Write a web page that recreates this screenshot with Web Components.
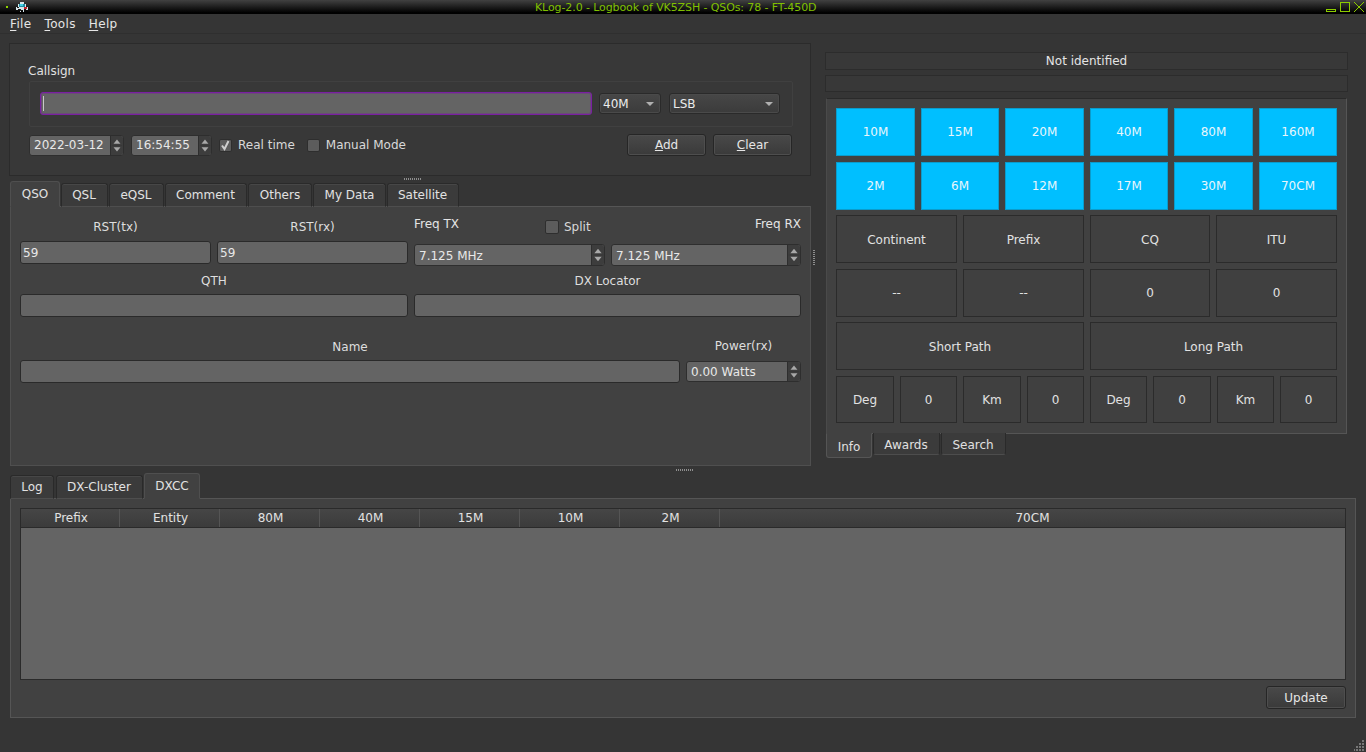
<!DOCTYPE html>
<html><head><meta charset="utf-8">
<style>
html,body{margin:0;padding:0;height:752px;overflow:hidden;background:#353535;color:#e4e4e4;font:12px/16px "DejaVu Sans",sans-serif}
k-window{display:block}
</style></head><body>
<k-window></k-window>
<script>
function def(name, css, html, extra){
  const t=document.createElement('template');
  t.innerHTML='<style>:host,*{box-sizing:border-box}'+css+'</style>'+html;
  customElements.define(name, class extends HTMLElement{
    constructor(){super();this.attachShadow({mode:'open'}).appendChild(t.content.cloneNode(true));}
    connectedCallback(){ if(extra) extra(this,this.shadowRoot); }
  });
}
const spinBtns=`<span class="b"><svg width="12" height="100%" viewBox="0 0 12 22" preserveAspectRatio="xMidYMid meet"><path d="M2 9L6 4l4 5z" fill="#a9a9a9"/><path d="M0 11H12" stroke="#383838"/><path d="M2 13l4 5 4-5z" fill="#a9a9a9"/></svg></span>`;

def('k-title',`:host{display:flex;align-items:center;height:14px;background:linear-gradient(#414141,#000 90%);position:relative;color:#80c000;line-height:14px}
.l{display:flex;align-items:center;width:535px;padding-left:6px;gap:8px}
.t{flex:1;white-space:nowrap;font-size:11px;letter-spacing:-.1px;padding-top:1px}
.r{display:flex;align-items:center;gap:4px;padding-right:2px}svg{display:block}`,
`<div class="l"><svg width="2" height="2"><rect width="2" height="2" fill="#8fd400"/></svg>
<svg width="12" height="10" viewBox="0 0 12 10"><path d="M4 0h4v2h2v3h2v3h-2V7H8v3H7V8H5v2H4V7H2v1H0V5h2V2h2z" fill="#d8e6ea"/><path d="M3 2h6v3H3z" fill="#1f8fa5"/><path d="M4 2h3v2H4z" fill="#46d0e6"/><path d="M8 5h3v2H8z" fill="#c8202a"/><path d="M1 5h2v1H1zM4 7h1v2H4z" fill="#222"/></svg></div>
<div class="t">KLog-2.0 - Logbook of VK5ZSH - QSOs: 78 - FT-450D</div>
<div class="r">
<svg width="10" height="10" viewBox="0 0 10 10"><rect x=".5" y="7.5" width="9" height="2" fill="none" stroke="#8ccc00"/></svg>
<svg width="10" height="10" viewBox="0 0 10 10"><rect x=".5" y=".5" width="9" height="9" fill="none" stroke="#8ccc00"/></svg>
<svg width="10" height="10" viewBox="0 0 10 10"><path d="M0 0l10 10M10 0L0 10" stroke="#8ccc00" fill="none"/></svg>
</div>`);

def('k-menu',`:host{display:flex;height:20px;padding:1px 0 0 10px;gap:13px;border-bottom:1px solid #2f2f2f;line-height:18px;color:#e6e6e6;letter-spacing:.35px}
u{text-underline-offset:2px}`,`<span><u>F</u>ile</span><span><u>T</u>ools</span><span><u>H</u>elp</span>`);

def('k-line',`:host{display:flex;align-items:center;height:var(--h,23px);padding:0 2px;background:#646464;border:1px solid #2a2a2a;border-radius:3px;color:#e8e8e8;min-width:0}`,`<slot></slot>`);

def('k-spin',`:host{display:flex;height:var(--h,22px);background:#646464;border:1px solid #2e2e2e;border-radius:3px;color:#e8e8e8;overflow:hidden;min-width:0}
.v{flex:1;display:flex;align-items:center;padding-left:var(--p,4px);padding-top:var(--pt,0);white-space:nowrap}
.b{flex:none;width:13px;background:#3d3d3d;border-left:1px solid #2e2e2e;display:flex;align-items:center;justify-content:center;height:100%}`,
`<div class="v"><slot></slot></div>`+spinBtns);

def('k-combo',`:host{display:flex;align-items:center;height:21px;padding:0 6px 0 3px;justify-content:space-between;background:linear-gradient(#474747,#3b3b3b);border:1px solid #2a2a2a;box-shadow:inset 0 0 0 1px #4a4a4a;border-radius:3px;color:#ececec}
i{display:block;width:0;height:0;border:4px solid transparent;border-top:4px solid #b0b0b0;border-bottom:0}`,`<span><slot></slot></span><i></i>`);

def('k-btn',`:host{display:flex;align-items:center;justify-content:center;height:22px;background:linear-gradient(#494949,#3a3a3a);border:1px solid #262626;box-shadow:inset 0 0 0 1px #4e4e4e;border-radius:3px;color:#e6e6e6}
::slotted(span){white-space:nowrap}`,`<slot></slot>`);

def('k-check',`:host{display:inline-flex;align-items:center;gap:var(--g,6px);color:#d8d8d8;white-space:nowrap}
.c{display:block;width:var(--s,13px);height:var(--s,13px);background:#5c5c5c;border:1px solid #2e2e2e;border-radius:2px}`,
`<svg class="c" viewBox="0 0 11 11"><path class="m" d="M2 5.5l2.5 3.5 4-8" fill="none" stroke="#cfcfcf" stroke-width="2" style="display:none"/></svg><slot></slot>`,
(el,s)=>{ if(el.hasAttribute('checked')) s.querySelector('.m').style.display='block'; });

def('k-tabbar',`:host{display:flex;align-items:flex-end;height:var(--tb,26px);padding-left:0;gap:1px;position:relative;z-index:1;margin-bottom:-1px}`,`<slot></slot>`);
def('k-tab',`:host{display:flex;align-items:center;justify-content:center;height:24px;width:var(--w);padding-right:var(--n,0);background:#3b3b3b;border:1px solid #2a2a2a;border-bottom:1px solid #4e4e4e;border-radius:3px 3px 0 0;color:#e2e2e2;box-shadow:inset 0 1px 0 #474747}
:host([on]){height:26px;background:#414141;border-color:#4f4f4f;border-bottom-color:#414141;box-shadow:none;padding-bottom:1px}`,`<slot></slot>`);

def('k-cell',`:host{display:flex;align-items:center;justify-content:center;min-width:0;background:#404040;border:1px solid #2b2b2b;color:#e2e2e2;padding-top:1px}
:host([band]){background:#00bfff;border-color:#0a9ccc;color:#e8f6fc;padding-top:0}`,`<slot></slot>`);

def('k-grip',`:host{display:flex;align-items:center;justify-content:center;flex:none}
.d{display:block}
:host([dir=h]) .d{width:18px;height:2px;background-size:2px 2px;background-image:linear-gradient(90deg,#8e8e8e 50%,transparent 50%)}
:host([dir=v]) .d{width:2px;height:16px;background-size:2px 2px;background-image:linear-gradient(#8e8e8e 50%,transparent 50%)}`,`<span class="d"></span>`);

def('k-callbar',`:host{display:block;width:802px;height:133px;background:#383838;border:1px solid #2b2b2b;padding:19px 18px 0}
.lab{height:18px;line-height:16px;color:#e0e0e0}
.frame{height:46px;width:764px;margin-left:1px;border:1px solid #404040;border-radius:2px;display:flex;align-items:center;padding:0 12px 1px 10px;gap:7px}
.in{flex:none;width:552px;height:23px;background:#646464;border:1px solid #7a1fa2;border-radius:3px;padding:3px 0 3px 2px;box-shadow:inset 0 0 0 1px #6a4a78}
.in i{display:block;width:1px;height:15px;background:#c8c8c8}
.row{display:flex;align-items:center;margin:7px 0 0 1px;height:22px}
.sp{flex:1}`,
`<div class="lab">Callsign</div>
<div class="frame"><div class="in"><i></i></div><k-combo style="width:62px">40M</k-combo><k-combo style="width:111px;margin-left:1px">LSB</k-combo></div>
<div class="row"><k-spin style="width:95px;--h:21px">2022-03-12</k-spin><k-spin style="width:81px;--h:21px;margin-left:7px">16:54:55</k-spin>
<k-check checked style="margin-left:7px">Real time</k-check><k-check style="margin-left:12px">Manual Mode</k-check><span class="sp"></span>
<k-btn style="width:79px"><span><u>A</u>dd</span></k-btn><k-btn style="width:79px;margin-left:7px"><span><u>C</u>lear</span></k-btn></div>`);

def('k-qso',`:host{display:block;height:260px;background:#414141;border:1px solid #4f4f4f;border-top-color:#555;padding:0 9px}
.g{display:grid;grid-template-columns:191px 191px 191px 190px;column-gap:6px}
.l{display:flex;align-items:center;justify-content:center;white-space:nowrap;color:#dedede}
.r1{grid-template-rows:34px 25px;align-items:start}
.r1 .l{height:16px;margin-top:12px}
.f{display:grid;grid-template-columns:131px auto 1fr;grid-column:3 / span 2;margin-top:9px;height:18px}
.f k-check{margin-top:3px;--s:14px;--g:5px}
.f span:last-child{justify-self:end}
.top2{margin-top:3px;--pt:1px}
.r2{display:grid;grid-template-columns:388px 387px;column-gap:6px;margin-top:7px}
.r2 .l{height:16px;margin-bottom:5px}
.r3{display:grid;grid-template-columns:660px 115px;column-gap:6px;margin-top:22px}
.r3 .l{height:16px;margin-bottom:5px}`,
`<div class="g r1">
<div class="l" style="grid-column:1">RST(tx)</div><div class="l" style="grid-column:2">RST(rx)</div>
<div class="f"><span>Freq TX</span><k-check>Split</k-check><span>Freq RX</span></div>
<k-line>59</k-line><k-line>59</k-line>
<k-spin class="top2" style="--h:22px">7.125 MHz</k-spin><k-spin class="top2" style="--h:22px">7.125 MHz</k-spin>
</div>
<div class="r2"><div class="l">QTH</div><div class="l">DX Locator</div><k-line></k-line><k-line></k-line></div>
<div class="r3"><div class="l">Name</div><div class="l" style="margin-top:-1px;margin-bottom:6px">Power(rx)</div><k-line></k-line><k-spin style="--h:21px;margin-top:1px">0.00 Watts</k-spin></div>`);

def('k-info',`:host{display:block;width:521px;height:336px;background:#414141;border:1px solid #555;border-left-color:#4a4a4a;border-top-color:#2a2a2a;padding:9px}
.w{height:315px;display:grid;grid-template-rows:48px 48px 48px 48px 48px 47px;row-gap:5.6px}
.r{display:grid;column-gap:6px}
.c6{grid-template-columns:79px 78px 79px 78px 79px 78px}.c4{grid-template-columns:121px 121px 120px 121px}.c2{grid-template-columns:248px 247px}.c8{grid-template-columns:58px 57px 58px 57px 57px 58px 57px 57px}`,
`<div class="w">
<div class="r c6"><k-cell band>10M</k-cell><k-cell band>15M</k-cell><k-cell band>20M</k-cell><k-cell band>40M</k-cell><k-cell band>80M</k-cell><k-cell band>160M</k-cell></div>
<div class="r c6"><k-cell band>2M</k-cell><k-cell band>6M</k-cell><k-cell band>12M</k-cell><k-cell band>17M</k-cell><k-cell band>30M</k-cell><k-cell band>70CM</k-cell></div>
<div class="r c4"><k-cell>Continent</k-cell><k-cell>Prefix</k-cell><k-cell>CQ</k-cell><k-cell>ITU</k-cell></div>
<div class="r c4"><k-cell>--</k-cell><k-cell>--</k-cell><k-cell>0</k-cell><k-cell>0</k-cell></div>
<div class="r c2"><k-cell>Short Path</k-cell><k-cell>Long Path</k-cell></div>
<div class="r c8"><k-cell>Deg</k-cell><k-cell>0</k-cell><k-cell>Km</k-cell><k-cell>0</k-cell><k-cell>Deg</k-cell><k-cell>0</k-cell><k-cell>Km</k-cell><k-cell>0</k-cell></div>
</div>`);

def('k-stabs',`:host{display:flex;align-items:flex-start;gap:1px;margin-top:-1px;position:relative;height:25px}
.t{display:flex;align-items:center;justify-content:center;height:22px;padding-top:2px;background:#3b3b3b;border:1px solid #2a2a2a;border-top:0;border-bottom-color:#4d4d4d;border-radius:0 0 3px 3px;color:#e0e0e0}
.on{height:25px;background:#414141;border:1px solid #555;border-top-color:#414141;padding-top:3px}`,
`<div class="t on" style="width:46px">Info</div><div class="t" style="width:67px;padding-right:1px">Awards</div><div class="t" style="width:65px;padding-right:1px">Search</div>`);

def('k-table',`:host{display:block;height:172px;margin:0;border:1px solid #2a2a2a;background:#646464}
.h{display:grid;grid-template-columns:99px repeat(6,100px) 1fr;height:19px;background:linear-gradient(#464646,#3b3b3b);border-bottom:1px solid #2a2a2a}
.h span{display:flex;align-items:center;justify-content:center;border-right:1px solid #555;line-height:17px;color:#e2e2e2;padding:1px 0 0 2px}
.h span:last-child{border-right:0;padding-left:0}`,
`<div class="h"><span>Prefix</span><span>Entity</span><span>80M</span><span>40M</span><span>15M</span><span>10M</span><span>2M</span><span>70CM</span></div>`);

def('k-bottom',`:host{display:block;width:1346px;height:220px;background:#414141;border:1px solid #555;padding:9px 9px 0}
.f{display:flex;justify-content:flex-end;margin-top:6px}`,
`<k-table></k-table><div class="f"><k-btn style="width:80px;height:23px">Update</k-btn></div>`);

def('k-window',`:host{display:block;height:752px;position:relative}
.main{display:flex;padding:9px 0 0 9px;height:432px}
.left{width:802px;flex:none}
.qsotabs{margin-left:1px;width:801px}
.vs{width:14px;height:429px;padding-right:8px}
.right{width:523px;padding-top:9px}
.lb{display:flex;align-items:center;justify-content:center;width:523px;height:18px;background:#383838;border:1px solid #2c2c2c}
.lb+.lb{height:17px;margin-top:5px}
.ip{margin:6px 0 0 1px}
.bot{padding-left:10px}
.sg{position:absolute;right:1px;bottom:1px}`,
`<k-title></k-title><k-menu></k-menu>
<div class="main">
<div class="left"><k-callbar></k-callbar>
<k-grip dir="h" style="height:5px;padding-left:5px"></k-grip>
<div class="qsotabs"><k-tabbar><k-tab on style="--w:50px">QSO</k-tab><k-tab style="--w:47px;--n:1px">QSL</k-tab><k-tab style="--w:55px;--n:1px">eQSL</k-tab><k-tab style="--w:82px;--n:1px">Comment</k-tab><k-tab style="--w:64px">Others</k-tab><k-tab style="--w:73px">My Data</k-tab><k-tab style="--w:72px;--n:1px">Satellite</k-tab></k-tabbar>
<k-qso></k-qso></div></div>
<k-grip dir="v" class="vs"></k-grip>
<div class="right"><div class="lb">Not identified</div><div class="lb"></div><div class="ip"><k-info></k-info><k-stabs></k-stabs></div></div>
</div>
<div class="bot"><k-grip dir="h" style="height:7px;width:1349px"></k-grip>
<k-tabbar><k-tab style="--w:44px;margin-right:1px">Log</k-tab><k-tab style="--w:87px;--n:1px">DX-Cluster</k-tab><k-tab on style="--w:56px">DXCC</k-tab></k-tabbar>
<k-bottom></k-bottom></div>
<svg class="sg" width="11" height="11" viewBox="0 0 11 11" fill="#777"><rect x="8" y="0" width="2" height="2"/><rect x="5" y="3" width="2" height="2"/><rect x="8" y="3" width="2" height="2"/><rect x="2" y="6" width="2" height="2"/><rect x="5" y="6" width="2" height="2"/><rect x="8" y="6" width="2" height="2"/><rect x="-1" y="9" width="2" height="2"/><rect x="2" y="9" width="2" height="2"/><rect x="5" y="9" width="2" height="2"/><rect x="8" y="9" width="2" height="2"/></svg>`);
</script>
</body></html>
